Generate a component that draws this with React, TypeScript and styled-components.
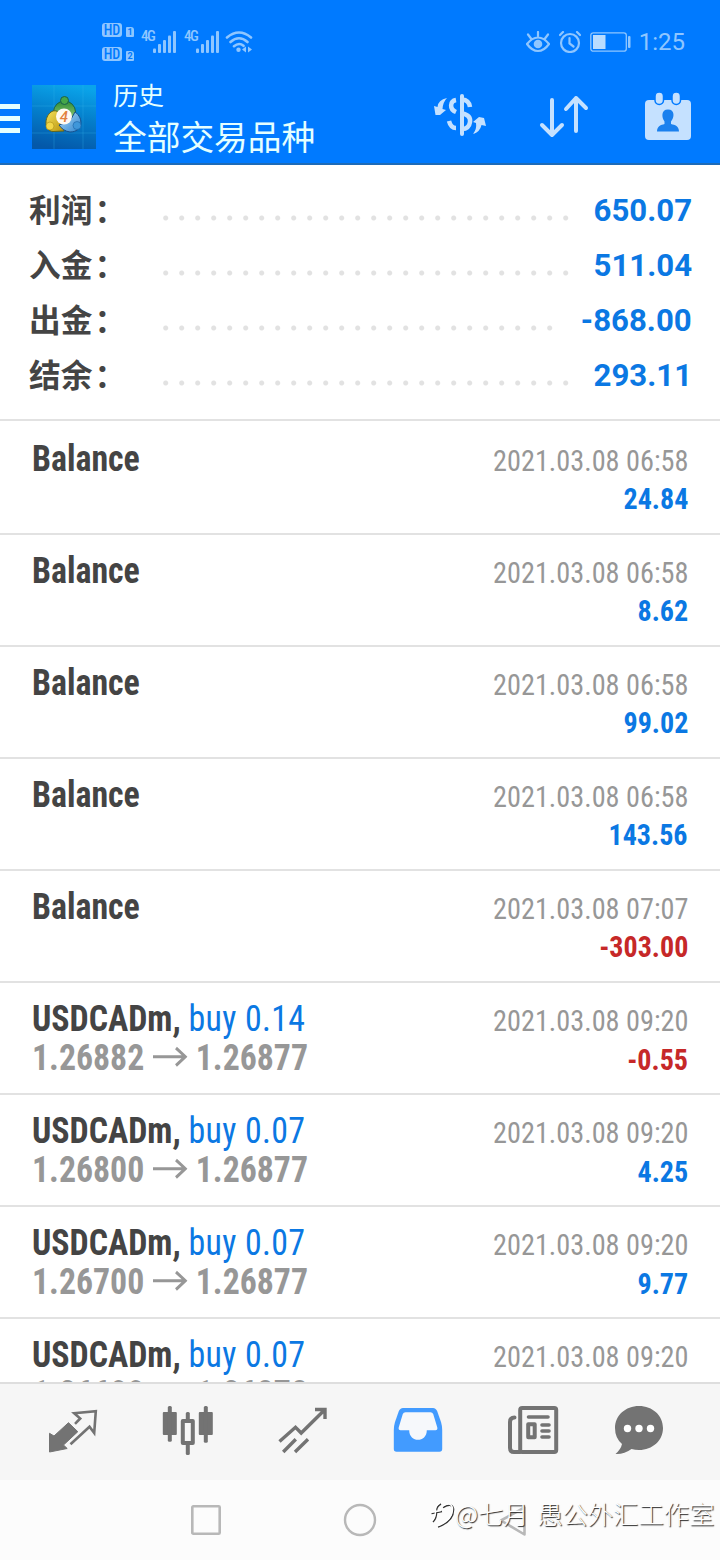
import React from 'react';
import styled, { createGlobalStyle } from 'styled-components';

const GlobalStyle = createGlobalStyle`
  * { box-sizing: border-box; }
  body { margin: 0; background: #fff; }
  svg { display: block; flex: none; }
`;

const condensed = '"Roboto Condensed", Roboto, "Noto Sans CJK SC", sans-serif';
const regular = 'Roboto, "Noto Sans CJK SC", sans-serif';
const tint = '#8fc6ff';
const action = '#c5e1ff';
const grey = '#737373';
const blue = '#0b78e3';

const Screen = styled.div`
  position: relative;
  display: flex;
  flex-direction: column;
  width: 720px;
  height: 1560px;
  overflow: hidden;
  background: #fff;
  font-family: ${regular};
`;

const Header = styled.header`
  flex: none;
  height: 165px;
  background: #007aff;
  border-bottom: 2px solid #1e6bb8;
`;

const StatusBar = styled.div`
  display: flex;
  justify-content: space-between;
  align-items: center;
  height: 84px;
  padding: 0 35px 0 102px;
  color: ${tint};
`;

const StatusGroup = styled.div`
  display: flex;
  align-items: center;
`;

const StatusIcons = styled.div`
  display: flex;
  align-items: center;
  gap: 9px;
`;

const HdColumn = styled.div`
  display: flex;
  flex-direction: column;
  gap: 10px;
  width: 39px;
`;

const HdRow = styled.div`
  display: flex;
  align-items: flex-end;
  gap: 4px;
`;

const HdBadge = styled.span`
  width: 20px;
  height: 14px;
  border-radius: 3px;
  background: ${tint};
  color: #007aff;
  font: 500 14px/14px ${condensed};
  text-align: center;
`;

const SimBadge = styled.span`
  width: 8px;
  height: 10px;
  border-radius: 1px 3px 1px 1px;
  background: ${tint};
  color: #007aff;
  font: 700 9px/10px ${regular};
  text-align: center;
`;

const Signal = styled.div`
  display: flex;
  align-items: flex-start;
  width: 43px;
  height: 22px;
`;

const Network = styled.span`
  width: 12px;
  font: 500 15px/11px ${condensed};
  letter-spacing: -1.5px;
`;

const Clock = styled.span`
  margin-left: 8px;
  font-size: 24px;
  line-height: 28px;
`;

const Toolbar = styled.div`
  display: flex;
  height: 79px;
`;

const MenuButton = styled.div`
  display: flex;
  flex-direction: column;
  gap: 7px;
  width: 32px;
  padding-top: 20px;
`;

const MenuBar = styled.span`
  width: 20px;
  height: 5px;
  background: #e4ffff;
`;

const AppIcon = styled.div`
  width: 64px;
  margin: 1px 17px 0 0;
`;

const Titles = styled.div`
  display: flex;
  flex-direction: column;
  flex: 1;
  color: #e4ffff;
`;

const Title = styled.span`
  font-size: 25.5px;
  line-height: 24px;
`;

const Subtitle = styled.span`
  font-size: 33.7px;
  line-height: 61px;
`;

const Actions = styled.div`
  display: flex;
  gap: 50px;
  padding: 8px 25px 0 0;
`;

const Summary = styled.section`
  flex: none;
  height: 256px;
  padding: 18px 28px 0 29px;
  border-bottom: 2px solid #e2e2e2;
`;

const SummaryRow = styled.div`
  display: flex;
  align-items: center;
  height: 55px;
`;

const SummaryLabel = styled.span`
  width: 132px;
  height: 55px;
  color: #444;
  font: 700 31.7px/51px "Noto Sans CJK SC", sans-serif;
`;

const Colon = styled.span`
  margin-left: 2px;
`;

const Leader = styled.span`
  flex: 1;
  height: 6px;
  margin: 14px 17px 0 0;
  background: radial-gradient(circle at 4.7px 3px, #e2e2e2 2px, transparent 3px) 0 0 / 16px 6px repeat-x;
`;

const SummaryValue = styled.span`
  color: ${blue};
  font-size: 32px;
  font-weight: 700;
  line-height: 55px;
  transform: scaleX(0.975);
  transform-origin: right;
`;

const Deals = styled.section`
  flex: 1;
  min-height: 0;
  overflow: hidden;
  font-family: ${condensed};
`;

const Deal = styled.article`
  height: 112px;
  padding: 17px 32px 0;
  border-bottom: 2px solid #e2e2e2;
  &:first-child { height: 114px; padding-top: 19px; }
`;

const DealLine = styled.div`
  display: flex;
  align-items: baseline;
  justify-content: space-between;
  height: 39px;
  line-height: 39px;
`;

const Name = styled.span`
  color: #444;
  font-size: 36px;
  font-weight: 700;
  transform: scaleX(0.94);
  transform-origin: left;
`;

const Order = styled.span`
  color: ${blue};
  font-weight: 400;
  letter-spacing: 0.4px;
`;

const Prices = styled.span`
  display: flex;
  align-items: baseline;
  color: #979797;
  font-size: 36px;
  font-weight: 700;
  transform: scaleX(0.938);
  transform-origin: left;
`;

const Arrow = styled.svg`
  margin: 0 9px;
`;

const Time = styled.span`
  color: #979797;
  font-size: 30px;
  transform: scaleX(0.942);
  transform-origin: right;
`;

const Amount = styled.span<{ $loss: boolean }>`
  margin-left: auto;
  color: ${(p) => (p.$loss ? '#c62828' : blue)};
  font-size: 30px;
  font-weight: 700;
  transform: scaleX(0.935);
  transform-origin: right;
`;

const TabBar = styled.nav`
  display: grid;
  grid-template-columns: repeat(5, 115px) 98px;
  flex: none;
  place-items: center;
  height: 98px;
  padding-left: 15px;
  background: #f6f6f6;
  border-top: 2px solid #dedede;
`;

const SystemBar = styled.nav`
  display: flex;
  flex: none;
  align-items: center;
  justify-content: center;
  gap: 120px;
  height: 80px;
  background: #fcfcfc;
`;

const Watermark = styled.div`
  position: absolute;
  top: 1495px;
  left: 429px;
  display: flex;
  align-items: center;
  height: 36px;
  color: #fff;
  font: 300 25.3px/36px "Noto Sans CJK SC", sans-serif;
  word-spacing: 3px;
  text-shadow: 1px 1px 1px #222;
  white-space: nowrap;
`;

const Bars = () => (
  <svg width="23" height="22" viewBox="0 0 23 22" fill={tint}>
    <rect x="0" y="17.5" width="3" height="4.5" rx="1" />
    <rect x="5" y="13" width="3" height="9" rx="1" />
    <rect x="10" y="9" width="3" height="13" rx="1" />
    <rect x="15" y="4.5" width="3" height="17.5" rx="1" />
    <rect x="20" y="0" width="3" height="22" rx="1" />
  </svg>
);

const WifiIcon = styled.svg`
  margin-left: -2px;
`;

const Wifi = () => (
  <WifiIcon width="28" height="24" viewBox="0 0 28 24" fill="none" stroke={tint} strokeWidth="2.6" strokeLinecap="round">
    <path d="M2 7.5Q14-2.5 26 7.5M5.5 12Q14 4.5 22.5 12M9 16.2Q14 12 18.5 15.8" />
    <circle cx="13.5" cy="19.8" r="2.2" fill={tint} stroke="none" />
    <path d="M17 19.5l4-3v6zM27 19.5l-4-3v6z" fill={tint} stroke="none" />
  </WifiIcon>
);

const Eye = () => (
  <svg width="24" height="22" viewBox="0 0 24 22" fill="none" stroke={tint} strokeWidth="2.2" strokeLinecap="round">
    <path d="M1 13Q6 6.500 12 6.500T23 13Q18 20 12 20T1 13zM12 1v4M2 3.500l3 4M22 3.500l-3 4" />
    <circle cx="12" cy="13" r="4.300" fill={tint} stroke="none" />
  </svg>
);

const Alarm = () => (
  <svg width="22" height="22" viewBox="0 0 22 22" fill="none" stroke={tint} strokeWidth="2.200" strokeLinecap="round">
    <circle cx="11" cy="12" r="9" />
    <path d="M10.500 7v5.500l4 3M1 4l3-3M21 4l-3-3" />
  </svg>
);

const Battery = () => (
  <svg width="41" height="20" viewBox="0 0 41 20" fill="none" stroke={tint}>
    <rect x=".8" y=".8" width="35.500" height="18.400" rx="2.500" strokeWidth="1.300" />
    <rect x="3" y="3" width="12.500" height="14" fill="#b9dcff" stroke="none" />
    <rect x="38" y="4" width="2.500" height="12" rx="1" fill={tint} stroke="none" />
  </svg>
);

const Logo = () => (
  <svg width="64" height="64" viewBox="0 0 64 64">
    <defs>
      <linearGradient id="tile" x1=".6" y1="0" x2=".4" y2="1">
        <stop offset="0" stopColor="#0aa4ea" />
        <stop offset=".5" stopColor="#047cc9" />
        <stop offset="1" stopColor="#0458a9" />
      </linearGradient>
      <linearGradient id="green" x1="0" y1="0" x2="0" y2="1">
        <stop offset="0" stopColor="#2f8c35" /><stop offset="1" stopColor="#a5d884" />
      </linearGradient>
      <linearGradient id="gold" x1="0" y1="0" x2="1" y2="1">
        <stop offset="0" stopColor="#f5e25c" /><stop offset="1" stopColor="#b9940d" />
      </linearGradient>
      <linearGradient id="azure" x1="0" y1="0" x2="1" y2="1">
        <stop offset="0" stopColor="#b3ddf7" /><stop offset="1" stopColor="#2d83cf" />
      </linearGradient>
    </defs>
    <rect width="64" height="64" fill="url(#tile)" />
    <path d="M0 21H64M0 48H64M22 0V64M51 0V64" stroke="#39b4ec" strokeOpacity=".3" />
    <circle cx="32.500" cy="27" r="11" fill="url(#green)" stroke="#18604b" />
    <circle cx="32.500" cy="15.500" r="4" fill="#45a749" stroke="#18604b" />
    <path d="M19 27C12 32 12 46 21 46.500L32 46L28 28Q23 24 19 27Z" fill="url(#gold)" stroke="#5f651e" />
    <circle cx="18" cy="41" r="4" fill="#f2d748" stroke="#a88d14" strokeWidth=".6" />
    <path d="M43 27C52 33 51 47 38 47Q31 46 27 40L38 36Z" fill="url(#azure)" stroke="#174f8b" />
    <circle cx="45" cy="40.500" r="4" fill="#3f97da" stroke="#1c62a5" strokeWidth=".6" />
    <circle cx="32" cy="31.500" r="8" fill="#fffaf2" />
    <text x="32" y="37" textAnchor="middle" fontFamily="Roboto, sans-serif" fontSize="15" fontWeight="500" fontStyle="italic" fill="#e2813f">4</text>
  </svg>
);

const CurrencyIcon = () => (
  <svg width="54" height="48" viewBox="0 0 54 48" fill="none" stroke={action} strokeWidth="4">
    <path d="M29 4V42" strokeLinecap="round" />
    <path d="M23 8C17 9 16 17 23 20M23 36C19 36 17 33 16 29" strokeWidth="4.500" />
    <path d="M29 7.500Q36 8 37 15M29 21.500Q38 23 37 30Q36 37 29 37" strokeWidth="4.500" />
    <path d="M14 6Q5 8 4.500 15L1 14L2.500 23L7 23L13 18L9.500 17Q10 10 14 6Z" fill={action} stroke="none" />
    <path d="M40 42Q44 37 43 31L40 30L46 25L51 26L53 34L48.500 33Q47 40 40 42Z" fill={action} stroke="none" />
  </svg>
);

const SortIcon = () => (
  <svg width="54" height="48" viewBox="0 0 54 48" fill="none" stroke={action} strokeWidth="4" strokeLinecap="round" strokeLinejoin="round">
    <path d="M15 8V42M5 33L15 43L25 33M39 39V6M29 17L39 6L49 16" />
  </svg>
);

const CalendarIcon = () => (
  <svg width="54" height="48" viewBox="0 0 54 48">
    <rect x="4" y="8" width="46" height="40" rx="4" fill={action} />
    <rect x="14" y="0" width="8.500" height="12.500" rx="4.200" fill={action} stroke="#007aff" strokeWidth="1.500" />
    <rect x="31" y="0" width="8.500" height="12.500" rx="4.200" fill={action} stroke="#007aff" strokeWidth="1.500" />
    <path d="M27 17.500c7 0 6.500 8 3 12v2.500c4 1 8 2 8 7.500H16c0-5.500 4-6.500 7.500-7.500V29.500C20.500 25.500 20 17.500 27 17.500z" fill="#1a80ee" />
  </svg>
);

const QuotesIcon = () => (
  <svg width="56" height="56" viewBox="0 0 56 56">
    <path d="M4.500 29.300V48L22.200 44.500L18.500 41L32.800 27.700L23.500 18.700L9 32Z" fill={grey} stroke={grey} strokeLinejoin="round" />
    <path d="M25.500 40.300L44.500 22.700L49.200 29L50.800 7.200L29.200 9.300L35.200 14.500L30 19.800" fill="none" stroke={grey} strokeWidth="2.600" />
  </svg>
);

const ChartIcon = () => (
  <svg width="56" height="56" viewBox="0 0 56 56" fill={grey}>
    <rect x="2.800" y="8" width="14" height="23" rx="1" />
    <rect x="7.800" y="2" width="4" height="35.700" rx="1.500" />
    <rect x="38.800" y="8" width="14" height="23" rx="1" />
    <rect x="43.800" y="2" width="4" height="36.700" rx="1.500" />
    <rect x="25.800" y="8" width="4" height="43" rx="1.500" />
    <rect x="22.800" y="17" width="10" height="22" fill="#f6f6f6" stroke={grey} strokeWidth="4" strokeLinejoin="round" />
  </svg>
);

const TradeIcon = () => (
  <svg width="56" height="56" viewBox="0 0 56 56" fill="none" stroke={grey} strokeWidth="3.400">
    <path d="M4.500 37.500L20.500 23.300L26.200 29L49 6.500M40 5.500H50V15M8.200 48L20.800 35.300M20 48L33 35.300" />
  </svg>
);

const HistoryIcon = () => (
  <svg width="56" height="56" viewBox="0 0 56 56">
    <path d="M13 4H43Q46 4 47.300 7.500L51 18Q52.200 22 52.200 26V45Q52.200 47.700 49.500 47.700H6.500Q3.800 47.700 3.800 45V26Q3.800 22 5 18L8.700 7.500Q10 4 13 4Z" fill="#429bff" />
    <path d="M15.500 8.200H40.500Q42.500 8.200 43.200 10L47.300 23.500Q47.800 26.300 45.500 26.300H36.800C36.800 39 19.200 39 19.200 26.300H10.500Q8.200 26.300 8.700 23.500L12.800 10Q13.500 8.200 15.500 8.200Z" fill="#f6f8fb" />
  </svg>
);

const NewsIcon = () => (
  <svg width="56" height="56" viewBox="0 0 56 56" fill="none" stroke={grey} strokeWidth="4" strokeLinecap="round">
    <rect x="15.200" y="4" width="36" height="44" rx="2" />
    <path d="M9.500 13.500Q5 13.500 5 18V44Q5 48 9 48H15" />
    <path d="M23.500 13H43M37 21H44M37 27H44M37 33H44" strokeWidth="3.600" />
    <rect x="23.200" y="20.200" width="6.500" height="13" strokeWidth="4" strokeLinejoin="round" />
  </svg>
);

const ChatIcon = () => (
  <svg width="56" height="56" viewBox="0 0 56 56">
    <path d="M28 2C41.500 2 52 11.500 52 24S41.500 46 28 46Q24 46 20.500 45Q13 50.500 4.500 50Q10 45 11 40Q4 34 4 24C4 11.500 14.500 2 28 2Z" fill={grey} />
    <g fill="#fff">
      <circle cx="16.500" cy="24.500" r="3.700" />
      <circle cx="28" cy="24.500" r="3.700" />
      <circle cx="39.500" cy="24.500" r="3.700" />
    </g>
  </svg>
);

const SquareKey = () => (
  <svg width="34" height="34" viewBox="0 0 34 34" fill="none" stroke="#b8b8b8" strokeWidth="2.600">
    <rect x="3.300" y="3.300" width="27.400" height="27.400" rx="1" />
  </svg>
);

const CircleKey = () => (
  <svg width="34" height="34" viewBox="0 0 34 34" fill="none" stroke="#b8b8b8" strokeWidth="2.400">
    <circle cx="17" cy="17" r="15" />
  </svg>
);

const BackKey = () => (
  <svg width="34" height="34" viewBox="0 0 34 34" fill="none" stroke="#b8b8b8" strokeWidth="2.600" strokeLinejoin="round">
    <path d="M4 17.500L27.500 4.500V31.500Z" />
  </svg>
);

const Signature = () => (
  <svg width="26" height="36" viewBox="0 0 26 36" fill="none">
    <path d="M12 9Q8 11 7.500 15Q8 23 4 27M2.500 18.500L13 16.500M14 12.500Q23 7 24.500 14Q25 26 9 32" stroke="#333" strokeWidth="1.600" />
    <path d="M11 8Q7 10 6.500 14Q7 22 3 26M1.500 17.500L12 15.500M13 11.500Q22 6 23.500 13Q24 25 8 31" stroke="#fff" strokeWidth="1.500" />
  </svg>
);

const totals = [
  ['利润', '650.07'],
  ['入金', '511.04'],
  ['出金', '-868.00'],
  ['结余', '293.11'],
];

type DealData = { name: string; order?: string; from?: string; to?: string; time: string; amount?: string };

const deals: DealData[] = [
  { name: 'Balance', time: '2021.03.08 06:58', amount: '24.84' },
  { name: 'Balance', time: '2021.03.08 06:58', amount: '8.62' },
  { name: 'Balance', time: '2021.03.08 06:58', amount: '99.02' },
  { name: 'Balance', time: '2021.03.08 06:58', amount: '143.56' },
  { name: 'Balance', time: '2021.03.08 07:07', amount: '-303.00' },
  { name: 'USDCADm,', order: 'buy 0.14', from: '1.26882', to: '1.26877', time: '2021.03.08 09:20', amount: '-0.55' },
  { name: 'USDCADm,', order: 'buy 0.07', from: '1.26800', to: '1.26877', time: '2021.03.08 09:20', amount: '4.25' },
  { name: 'USDCADm,', order: 'buy 0.07', from: '1.26700', to: '1.26877', time: '2021.03.08 09:20', amount: '9.77' },
  { name: 'USDCADm,', order: 'buy 0.07', from: '1.26600', to: '1.26878', time: '2021.03.08 09:20' },
];

export default function App() {
  return (
    <Screen>
      <GlobalStyle />
      <Header>
        <StatusBar>
          <StatusGroup>
            <HdColumn>
              <HdRow><HdBadge>HD</HdBadge><SimBadge>1</SimBadge></HdRow>
              <HdRow><HdBadge>HD</HdBadge><SimBadge>2</SimBadge></HdRow>
            </HdColumn>
            <Signal><Network>4G</Network><Bars /></Signal>
            <Signal><Network>4G</Network><Bars /></Signal>
            <Wifi />
          </StatusGroup>
          <StatusGroup>
            <StatusIcons><Eye /><Alarm /><Battery /></StatusIcons>
            <Clock>1:25</Clock>
          </StatusGroup>
        </StatusBar>
        <Toolbar>
          <MenuButton><MenuBar /><MenuBar /><MenuBar /></MenuButton>
          <AppIcon><Logo /></AppIcon>
          <Titles>
            <Title>历史</Title>
            <Subtitle>全部交易品种</Subtitle>
          </Titles>
          <Actions><CurrencyIcon /><SortIcon /><CalendarIcon /></Actions>
        </Toolbar>
      </Header>
      <Summary>
        {totals.map(([label, value]) => (
          <SummaryRow key={label}>
            <SummaryLabel>{label}<Colon>：</Colon></SummaryLabel>
            <Leader />
            <SummaryValue>{value}</SummaryValue>
          </SummaryRow>
        ))}
      </Summary>
      <Deals>
        {deals.map((d, i) => (
          <Deal key={i}>
            <DealLine>
              <Name>{d.name} {d.order && <Order>{d.order}</Order>}</Name>
              <Time>{d.time}</Time>
            </DealLine>
            <DealLine>
              {d.from && (
                <Prices>
                  {d.from}
                  <Arrow width="37" height="24" viewBox="0 0 37 24" fill="none" stroke="#979797" strokeWidth="3">
                    <path d="M0 10.700H34M24.500 2L34.500 10.700L24.500 19.500" />
                  </Arrow>
                  {d.to}
                </Prices>
              )}
              {d.amount && <Amount $loss={d.amount.startsWith('-')}>{d.amount}</Amount>}
            </DealLine>
          </Deal>
        ))}
      </Deals>
      <TabBar>
        <QuotesIcon /><ChartIcon /><TradeIcon /><HistoryIcon /><NewsIcon /><ChatIcon />
      </TabBar>
      <SystemBar><SquareKey /><CircleKey /><BackKey /></SystemBar>
      <Watermark><Signature />@七月 愚公外汇工作室</Watermark>
    </Screen>
  );
}
